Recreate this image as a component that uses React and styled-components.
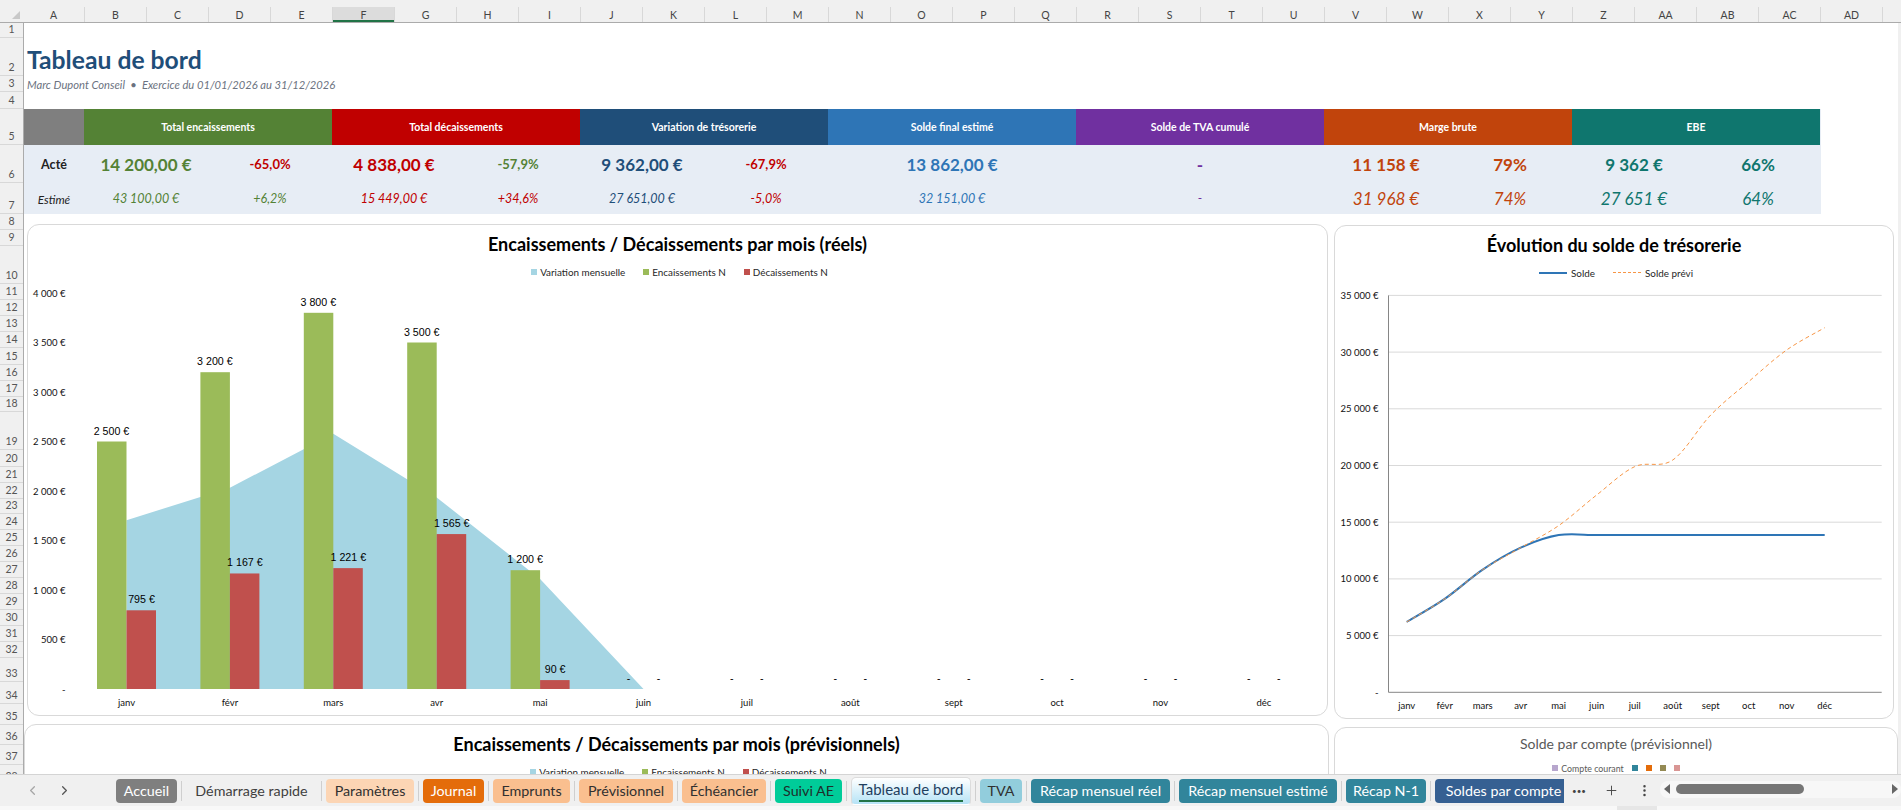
import styled, { createGlobalStyle } from 'styled-components';
import { ChevronLeft, ChevronRight, Plus, MoreVertical } from 'lucide-react';

const COLUMNS = [
  'A', 'B', 'C', 'D', 'E', 'F', 'G', 'H', 'I', 'J', 'K', 'L', 'M', 'N', 'O',
  'P', 'Q', 'R', 'S', 'T', 'U', 'V', 'W', 'X', 'Y', 'Z', 'AA', 'AB', 'AC', 'AD',
];

// row heights in pixels, row 1 to row 38
const ROW_HEIGHTS = [
  15, 38, 16, 17, 36, 38, 31, 16, 16, 38, 16, 16, 16, 16, 17, 16, 16, 15, 38,
  17, 16, 16, 15, 16, 16, 16, 16, 16, 16, 16, 16, 16, 24, 22, 21, 20, 20, 20,
];

const KPIS = [
  { title: 'Total encaissements', color: '#548235', actual: [['14 200,00 €', '#548235'], ['-65,0%', '#c00000']], estimate: [['43 100,00 €', '#548235'], ['+6,2%', '#548235']] },
  { title: 'Total décaissements', color: '#c00000', actual: [['4 838,00 €', '#c00000'], ['-57,9%', '#548235']], estimate: [['15 449,00 €', '#c00000'], ['+34,6%', '#c00000']] },
  { title: 'Variation de trésorerie', color: '#1f4e79', actual: [['9 362,00 €', '#1f4e79'], ['-67,9%', '#c00000']], estimate: [['27 651,00 €', '#1f4e79'], ['-5,0%', '#c00000']] },
  { title: 'Solde final estimé', color: '#2e75b6', actual: [['13 862,00 €', '#2e75b6']], estimate: [['32 151,00 €', '#2e75b6']] },
  { title: 'Solde de TVA cumulé', color: '#7030a0', actual: [['-', '#7030a0']], estimate: [['-', '#7030a0']] },
  { title: 'Marge brute', color: '#c1440c', wide: true, actual: [['11 158 €', '#c1440c'], ['79%', '#c1440c']], estimate: [['31 968 €', '#c1440c'], ['74%', '#c1440c']] },
  { title: 'EBE', color: '#0f766e', wide: true, actual: [['9 362 €', '#0f766e'], ['66%', '#0f766e']], estimate: [['27 651 €', '#0f766e'], ['64%', '#0f766e']] },
];

const TABS = [
  { label: 'Accueil', width: 61, bg: '#7f7f7f', fg: '#fff' },
  { label: 'Démarrage rapide', width: 131, bg: 'transparent', fg: '#404040' },
  { label: 'Paramètres', width: 88, bg: '#fcd5b4', fg: '#303030' },
  { label: 'Journal', width: 61, bg: '#e46c0a', fg: '#fff' },
  { label: 'Emprunts', width: 77, bg: '#fabf8f', fg: '#303030' },
  { label: 'Prévisionnel', width: 94, bg: '#fabf8f', fg: '#303030' },
  { label: 'Échéancier', width: 84, bg: '#fabf8f', fg: '#303030' },
  { label: 'Suivi AE', width: 67, bg: '#00cc99', fg: '#1f2d2a' },
  { label: 'Tableau de bord', width: 120, active: true },
  { label: 'TVA', width: 42, bg: '#92cddc', fg: '#303030' },
  { label: 'Récap mensuel réel', width: 139, bg: '#31859b', fg: '#fff' },
  { label: 'Récap mensuel estimé', width: 158, bg: '#31859b', fg: '#fff' },
  { label: 'Récap N-1', width: 80, bg: '#31859b', fg: '#fff' },
  { label: 'Soldes par compte', width: 137, bg: '#366092', fg: '#fff' },
];

const MONTHS = ['janv', 'févr', 'mars', 'avr', 'mai', 'juin', 'juil', 'août', 'sept', 'oct', 'nov', 'déc'];
const CASH_IN = [2500, 3200, 3800, 3500, 1200, 0, 0, 0, 0, 0, 0, 0];
const CASH_OUT = [795, 1167, 1221, 1565, 90, 0, 0, 0, 0, 0, 0, 0];
const BALANCE = [6205, 8238, 10817, 12752, 13862, 13862, 13862, 13862, 13862, 13862, 13862, 13862];
const FORECAST = [6205, 8238, 10817, 12752, 14700, 17400, 19900, 20480, 24450, 27400, 30190, 32150];

const euro = (value) => {
  if (!value) return '-';
  const text = String(value);
  return text.length > 3 ? `${text.slice(0, -3)} ${text.slice(-3)} €` : `${text} €`;
};

// page-pixel scales of the two charts
const barX = (i) => 126 + i * 103.4;
const barY = (v) => 689 - v * 0.099;
const lineX = (i) => 1406.7 + i * 38;
const lineY = (v) => 692.3 - v * 0.01134;

const smoothPath = (points) => {
  let d = `M${points[0][0]} ${points[0][1]}`;
  for (let i = 0; i < points.length - 1; i++) {
    const p0 = points[Math.max(i - 1, 0)];
    const p1 = points[i];
    const p2 = points[i + 1];
    const p3 = points[Math.min(i + 2, points.length - 1)];
    const c1 = [p1[0] + (p2[0] - p0[0]) / 6, p1[1] + (p2[1] - p0[1]) / 6];
    const c2 = [p2[0] - (p3[0] - p1[0]) / 6, p2[1] - (p3[1] - p1[1]) / 6];
    d += ` C${c1[0]} ${c1[1]} ${c2[0]} ${c2[1]} ${p2[0]} ${p2[1]}`;
  }
  return d;
};

const App = () => {
  const areaPoints = CASH_IN.slice(0, 6)
    .map((v, i) => `${barX(i)},${barY(v - CASH_OUT[i])}`)
    .join(' ');

  return (
    <Page>
      <GlobalStyle />
      <ColumnBar>
        <Corner />
        {COLUMNS.map((col) => (
          <ColumnCell key={col} $selected={col === 'F'}>{col}</ColumnCell>
        ))}
      </ColumnBar>

      <Workspace>
        <RowBar>
          {ROW_HEIGHTS.map((height, i) => (
            <RowCell key={i} $height={height}>{i + 1}</RowCell>
          ))}
        </RowBar>

        <Sheet>
          <Heading>
            <Title>Tableau de bord</Title>
            <Subtitle>Marc Dupont Conseil&nbsp; •&nbsp; Exercice du 01/01/2026 au 31/12/2026</Subtitle>
          </Heading>

          <KpiGrid>
            <KpiCorner />
            {KPIS.map((kpi) => (
              <KpiHead key={kpi.title} $color={kpi.color}>{kpi.title}</KpiHead>
            ))}
            <RowTitle>Acté</RowTitle>
            {KPIS.map((kpi) =>
              kpi.actual.map(([text, color]) => (
                <ActualValue key={text + kpi.title} $color={color} $solo={kpi.actual.length === 1} $pct={text.includes('%')} $wide={kpi.wide}>
                  {text}
                </ActualValue>
              )),
            )}
            <RowTitle $estimate>Estimé</RowTitle>
            {KPIS.map((kpi) =>
              kpi.estimate.map(([text, color]) => (
                <EstimateValue key={text + kpi.title} $color={color} $solo={kpi.estimate.length === 1} $wide={kpi.wide}>
                  {text}
                </EstimateValue>
              )),
            )}
          </KpiGrid>

          <ChartRow>
            <Card $width={1301} $height={492} $left={3} $top={0}>
              <CardTitle $height={38}>Encaissements / Décaissements par mois (réels)</CardTitle>
              <Legend $height={17}>
                <LegendItem><Swatch $color="#a5d5e3" />Variation mensuelle</LegendItem>
                <LegendItem><Swatch $color="#9bbb59" />Encaissements N</LegendItem>
                <LegendItem><Swatch $color="#c0504d" />Décaissements N</LegendItem>
              </Legend>
              <svg width="1299" height="435" viewBox="27.5 280 1299 435">
                <polygon points={`${barX(0)},689 ${areaPoints}`} fill="#a5d5e3" />
                {[4000, 3500, 3000, 2500, 2000, 1500, 1000, 500, 0].map((v) => (
                  <AxisText key={v} x="65" y={barY(v) + 3.5} textAnchor="end">{euro(v)}</AxisText>
                ))}
                {MONTHS.map((month, i) => (
                  <g key={month}>
                    <rect x={barX(i) - 29.5} y={barY(CASH_IN[i])} width="29.5" height={689 - barY(CASH_IN[i])} fill="#9bbb59" />
                    <rect x={barX(i)} y={barY(CASH_OUT[i])} width="29.5" height={689 - barY(CASH_OUT[i])} fill="#c0504d" />
                    <DataText x={barX(i) - 15} y={barY(CASH_IN[i]) - 7} textAnchor="middle">{euro(CASH_IN[i])}</DataText>
                    <DataText x={barX(i) + 15} y={barY(CASH_OUT[i]) - 7} textAnchor="middle">{euro(CASH_OUT[i])}</DataText>
                    <AxisText x={barX(i)} y="706" textAnchor="middle">{month}</AxisText>
                  </g>
                ))}
              </svg>
            </Card>

            <Card $width={560} $height={494} $left={6} $top={1}>
              <CardTitle $height={37}>Évolution du solde de trésorerie</CardTitle>
              <Legend $height={19}>
                <LegendItem><LegendLine />Solde</LegendItem>
                <LegendItem><LegendLine $dashed />Solde prévi</LegendItem>
              </Legend>
              <svg width="558" height="436" viewBox="1335 282 558 436">
                {[35000, 30000, 25000, 20000, 15000, 10000, 5000, 0].map((v) => (
                  <g key={v}>
                    <AxisText x="1378.5" y={lineY(v) + 3.5} textAnchor="end">{euro(v)}</AxisText>
                    <line x1="1388.5" x2="1881.7" y1={lineY(v)} y2={lineY(v)} stroke={v ? '#d9d9d9' : '#868686'} />
                  </g>
                ))}
                <line x1="1388.5" x2="1388.5" y1={lineY(35000)} y2={lineY(0)} stroke="#868686" />
                <path d={smoothPath(BALANCE.map((v, i) => [lineX(i), lineY(v)]))} fill="none" stroke="#2e75b6" strokeWidth="2" />
                <path d={smoothPath(FORECAST.map((v, i) => [lineX(i), lineY(v)]))} fill="none" stroke="#f79646" strokeWidth="1" strokeDasharray="4 3" />
                {MONTHS.map((month, i) => (
                  <AxisText key={month} x={lineX(i)} y="709" textAnchor="middle">{month}</AxisText>
                ))}
              </svg>
            </Card>
          </ChartRow>

          <ChartRow $gap={5}>
            <Card $width={1305} $height={200} $left={0} $top={0}>
              <CardTitle $height={38}>Encaissements / Décaissements par mois (prévisionnels)</CardTitle>
              <Legend $height={17}>
                <LegendItem><Swatch $color="#a5d5e3" />Variation mensuelle</LegendItem>
                <LegendItem><Swatch $color="#9bbb59" />Encaissements N</LegendItem>
                <LegendItem><Swatch $color="#c0504d" />Décaissements N</LegendItem>
              </Legend>
            </Card>
            <Card $width={564} $height={200} $left={5} $top={3}>
              <CardTitle $height={31} $muted>Solde par compte (prévisionnel)</CardTitle>
              <Legend $height={18} $gap={8}>
                <LegendItem $small><Swatch $color="#b7a6cd" />Compte courant</LegendItem>
                <Swatch $color="#31859b" />
                <Swatch $color="#e46c0a" />
                <Swatch $color="#948a54" />
                <Swatch $color="#d99694" />
              </Legend>
            </Card>
          </ChartRow>
        </Sheet>
      </Workspace>

      <TabBar>
        <TabNav>
          <ChevronLeft size={15} color="#a6a6a6" />
          <ChevronRight size={15} color="#555" />
        </TabNav>
        <TabList>
          {TABS.map((tab, i) => (
            <TabSlot key={tab.label}>
              {i > 0 && <TabSeparator />}
              {tab.active ? (
                <ActiveTab $width={tab.width}><ActiveLabel>{tab.label}</ActiveLabel></ActiveTab>
              ) : (
                <Tab $width={tab.width} $bg={tab.bg} $fg={tab.fg}>{tab.label}</Tab>
              )}
            </TabSlot>
          ))}
        </TabList>
        <TabTools>
          <MoreDots>•••</MoreDots>
          <Plus size={15} color="#444" strokeWidth={1.5} />
          <MoreVertical size={15} color="#444" />
        </TabTools>
        <ScrollTrack>
          <ScrollArrow $left />
          <ScrollThumb />
          <ScrollArrow />
        </ScrollTrack>
      </TabBar>
      <StatusStrip>
        <StatusBlock />
      </StatusStrip>
    </Page>
  );
};

const GlobalStyle = createGlobalStyle`
  html, body {
    margin: 0;
    padding: 0;
    background: #f0f0f0;
    overflow: hidden;
  }

  * {
    box-sizing: border-box;
  }
`;

const Page = styled.div`
  width: 1901px;
  height: 810px;
  display: flex;
  flex-direction: column;
  background: #f0f0f0;
  font-family: Lato, 'Liberation Sans', sans-serif;
  overflow: hidden;
`;

const ColumnBar = styled.div`
  height: 23px;
  flex: none;
  display: flex;
  padding-top: 7px;
  padding-right: 3px;
  border-bottom: 1px solid #ababab;
`;

const Corner = styled.div`
  width: 23px;
  flex: none;
  display: flex;
  align-items: flex-end;
  justify-content: flex-end;
  padding: 0 3px 3px 0;

  &::after {
    content: '';
    border-style: solid;
    border-width: 0 0 8px 8px;
    border-color: transparent transparent #c8c8c8 transparent;
  }
`;

const ColumnCell = styled.div`
  width: 62px;
  flex: none;
  display: flex;
  align-items: center;
  justify-content: center;
  font-size: 10.5px;
  color: #444;
  border-right: 1px solid #d8d8d8;
  background: ${(p) => (p.$selected ? '#dcdcdc' : 'transparent')};
  box-shadow: ${(p) => (p.$selected ? 'inset 0 -2px 0 #217346' : 'none')};
`;

const Workspace = styled.div`
  height: 751px;
  flex: none;
  display: flex;
  overflow: hidden;
  padding-right: 3px;
`;

const RowBar = styled.div`
  width: 23px;
  flex: none;
  display: flex;
  flex-direction: column;
`;

const RowCell = styled.div`
  height: ${(p) => p.$height}px;
  flex: none;
  display: flex;
  align-items: flex-end;
  justify-content: center;
  padding-bottom: 1px;
  font-size: 10.5px;
  line-height: 13px;
  color: #555;
  border-bottom: 1px solid #d8d8d8;
`;

const Sheet = styled.div`
  flex: 1;
  background: #fff;
  overflow: hidden;
  border-left: 1px solid #ababab;
`;

const Heading = styled.div`
  height: 86px;
  padding: 23px 0 0 3px;
  display: flex;
  flex-direction: column;
`;

const Title = styled.div`
  font-size: 24.7px;
  line-height: 28px;
  font-weight: 700;
  color: #1f4e79;
`;

const Subtitle = styled.div`
  margin-top: 4px;
  font-size: 11.2px;
  line-height: 14px;
  font-style: italic;
  color: #6b7280;
`;

const KpiGrid = styled.div`
  width: 1797px;
  display: grid;
  grid-template-columns: 60px repeat(14, 124px);
  grid-template-rows: 36px 38px 31px;
  background: #e7edf5;
`;

const KpiCorner = styled.div`
  background: #7f7f7f;
`;

const KpiHead = styled.div`
  grid-column: span 2;
  display: flex;
  align-items: center;
  justify-content: center;
  font-size: 10.5px;
  font-weight: 700;
  color: #fff;
  background: ${(p) => p.$color};
`;

const RowTitle = styled.div`
  display: flex;
  align-items: center;
  justify-content: center;
  font-size: ${(p) => (p.$estimate ? '11.7px' : '12.5px')};
  font-weight: ${(p) => (p.$estimate ? 400 : 700)};
  font-style: ${(p) => (p.$estimate ? 'italic' : 'normal')};
  color: #222;
`;

const ActualValue = styled.div`
  grid-column: span ${(p) => (p.$solo ? 2 : 1)};
  display: flex;
  align-items: center;
  justify-content: center;
  font-weight: 700;
  font-size: ${(p) => (p.$wide ? '17px' : p.$pct ? '13px' : '17px')};
  color: ${(p) => p.$color};
`;

const EstimateValue = styled.div`
  grid-column: span ${(p) => (p.$solo ? 2 : 1)};
  display: flex;
  align-items: center;
  justify-content: center;
  font-style: italic;
  font-size: ${(p) => (p.$wide ? '17px' : '12.5px')};
  color: ${(p) => p.$color};
`;

const ChartRow = styled.div`
  display: flex;
  align-items: flex-start;
  margin-top: ${(p) => (p.$gap ? p.$gap : 10)}px;
  height: ${(p) => (p.$gap ? 60 : 495)}px;
`;

const Card = styled.div`
  width: ${(p) => p.$width}px;
  height: ${(p) => p.$height}px;
  flex: none;
  margin-left: ${(p) => p.$left}px;
  margin-top: ${(p) => p.$top}px;
  background: #fff;
  border: 1px solid #d9d9d9;
  border-radius: 12px;
  overflow: hidden;

  svg {
    display: block;
  }
`;

const CardTitle = styled.div`
  height: ${(p) => p.$height}px;
  display: flex;
  align-items: center;
  justify-content: center;
  font-size: ${(p) => (p.$muted ? '14px' : '18px')};
  font-weight: ${(p) => (p.$muted ? 400 : 700)};
  color: ${(p) => (p.$muted ? '#595959' : '#000')};
`;

const Legend = styled.div`
  height: ${(p) => p.$height}px;
  display: flex;
  align-items: center;
  justify-content: center;
  gap: ${(p) => (p.$gap ? p.$gap : 18)}px;
  padding-left: ${(p) => (p.$gap ? 0 : 4)}px;
`;

const LegendItem = styled.div`
  display: flex;
  align-items: center;
  gap: 3px;
  font-size: ${(p) => (p.$small ? '8.8px' : '9.9px')};
  color: ${(p) => (p.$small ? '#595959' : '#262626')};
`;

const Swatch = styled.span`
  width: 6px;
  height: 6px;
  flex: none;
  background: ${(p) => p.$color};
`;

const LegendLine = styled.span`
  width: 28px;
  margin-right: 1px;
  border-top: ${(p) => (p.$dashed ? '1px dashed #f79646' : '2px solid #2e75b6')};
`;

const AxisText = styled.text`
  font-family: Lato, 'Liberation Sans', sans-serif;
  font-size: 9.5px;
  fill: #111;
`;

const DataText = styled.text`
  font-family: 'Liberation Sans', Arial, sans-serif;
  font-size: 10.67px;
  fill: #000;
`;

const TabBar = styled.div`
  height: 32px;
  flex: none;
  display: flex;
  align-items: center;
  border-top: 1px solid #d4d4d4;
  background: #f0f0f0;
`;

const TabNav = styled.div`
  width: 116px;
  flex: none;
  display: flex;
  gap: 17px;
  padding-left: 25px;
`;

const TabList = styled.div`
  width: 1448px;
  height: 100%;
  flex: none;
  display: flex;
  align-items: center;
  overflow: hidden;
`;

const TabSlot = styled.div`
  flex: none;
  display: flex;
  align-items: center;
`;

const TabSeparator = styled.span`
  width: 1px;
  height: 20px;
  margin: 0 4px;
  background: #cfcfcf;
`;

const Tab = styled.div`
  width: ${(p) => p.$width}px;
  height: 24px;
  flex: none;
  display: flex;
  align-items: center;
  justify-content: center;
  border-radius: 4px;
  white-space: nowrap;
  font-size: 14.3px;
  color: ${(p) => p.$fg};
  background: ${(p) => p.$bg};
`;

const ActiveTab = styled.div`
  width: ${(p) => p.$width}px;
  height: 28px;
  flex: none;
  display: flex;
  justify-content: center;
  padding-top: 2px;
  border: 1px solid #dcdcdc;
  border-bottom-color: #fff;
  border-radius: 5px 5px 4px 4px;
  background: linear-gradient(#ffffff, #b5e3f6);
`;

const ActiveLabel = styled.span`
  height: 22px;
  font-size: 15px;
  line-height: 19px;
  color: #1f3f5f;
  border-bottom: 2px solid #217346;
`;

const TabTools = styled.div`
  width: 96px;
  flex: none;
  display: flex;
  align-items: center;
  justify-content: space-between;
  padding: 0 8px 0 8px;
`;

const MoreDots = styled.span`
  font-size: 8px;
  letter-spacing: 0;
  color: #444;
`;

const ScrollTrack = styled.div`
  flex: 1;
  height: 17px;
  display: flex;
  align-items: center;
  gap: 6px;
  padding: 0 3px 0 4px;
  margin-top: -3px;
  border-radius: 8px;
  background: #f7f7f7;
`;

const ScrollArrow = styled.span`
  border-style: solid;
  border-width: 5px 0 5px 6px;
  border-color: transparent transparent transparent #666;
  transform: ${(p) => (p.$left ? 'rotate(180deg)' : 'none')};
  margin-left: ${(p) => (p.$left ? '0' : 'auto')};
`;

const ScrollThumb = styled.span`
  width: 128px;
  height: 10px;
  border-radius: 5px;
  background: #767676;
`;

const StatusStrip = styled.div`
  height: 4px;
  flex: none;
  background: #f8f8f8;
  padding-left: 1617px;
`;

const StatusBlock = styled.div`
  width: 40px;
  height: 4px;
  background: #e6e6e6;
`;

export default App;
